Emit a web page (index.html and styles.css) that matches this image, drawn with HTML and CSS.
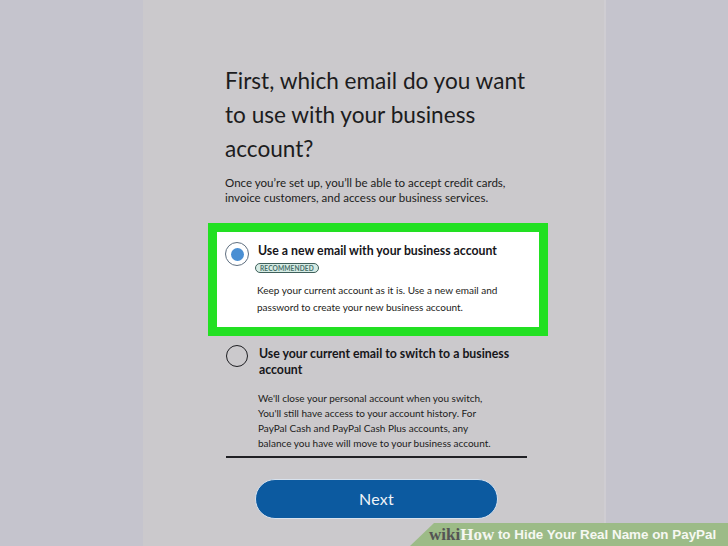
FILE: index.html
```html
<!DOCTYPE html>
<html lang="en">
<head>
<meta charset="utf-8">
<title>Business account email</title>
<link rel="stylesheet" href="styles.css">
</head>
<body>
<div class="page">
  <div class="side"></div>
  <main class="panel">
    <div class="content">
      <h1 class="heading">First, which email do you want to use with your business account?</h1>
      <p class="lead">Once you’re set up, you’ll be able to accept credit cards, invoice customers, and access our business services.</p>

      <div class="option option-selected">
        <span class="radio radio-on"><span class="dot"></span></span>
        <div class="option-body">
          <div class="option-title">Use a new email with your business account</div>
          <span class="badge">RECOMMENDED</span>
          <p class="option-desc">Keep your current account as it is. Use a new email and password to create your new business account.</p>
        </div>
      </div>

      <div class="option option-plain">
        <span class="radio radio-off"></span>
        <div class="option-body">
          <div class="option-title title-wrap">Use your current email to switch to a business account</div>
          <p class="option-desc desc-long">We'll close your personal account when you switch, You'll still have access to your account history. For PayPal Cash and PayPal Cash Plus accounts, any balance you have will move to your business account.</p>
        </div>
      </div>

      <div class="divider"></div>

      <button class="next" type="button">Next</button>
    </div>
  </main>
  <div class="side side-right"></div>

  <div class="wikihow"><span class="wh-wiki">wiki</span><span class="wh-how">How</span><span class="wh-rest"> to Hide Your Real Name on PayPal</span></div>
</div>
</body>
</html>
```

FILE: styles.css
```css
* { box-sizing: border-box; }

html, body {
  margin: 0;
  padding: 0;
  width: 728px;
  height: 546px;
  overflow: hidden;
}

body {
  font-family: "Lato", "Open Sans", sans-serif;
  color: #1e1e22;
  background: #c5c4cd;
}

.page {
  position: relative;
  display: flex;
  width: 728px;
  height: 546px;
}

.side {
  width: 143px;
  flex: none;
  background: #c5c4cd;
}

.side-right {
  flex: 1;
  width: auto;
  border-left: 2px solid #cfcdd2;
}

.panel {
  width: 461px;
  flex: none;
  background: #cbc9cc;
  padding: 64px 0 0 65px;
}

.content {
  width: 341px;
  display: flex;
  flex-direction: column;
  align-items: flex-start;
}

.heading {
  margin: 0;
  padding-left: 17px;
  font-weight: 400;
  font-size: 22.6px;
  line-height: 34px;
  color: #1c1c20;
  width: 325px;
}

.lead {
  margin: 9px 0 0;
  padding-left: 17px;
  font-size: 11.55px;
  line-height: 15px;
  color: #1c1c20;
  width: 310px;
}

.option {
  display: flex;
  align-items: flex-start;
}

.option-selected {
  margin-top: 18px;
  width: 340px;
  background: #ffffff;
  border: 9px solid #22e022;
  padding: 11px 8px 12px 8px;
}

.option-plain {
  padding: 10px 0 0 18px;
}

.radio {
  flex: none;
  border-radius: 50%;
  display: flex;
  align-items: center;
  justify-content: center;
}

.radio-on {
  width: 24px;
  height: 24px;
  border: 1.5px solid #5f6f80;
  margin-top: -1px;
}

.dot {
  width: 13px;
  height: 13px;
  border-radius: 50%;
  background: #4a8fd3;
}

.radio-off {
  width: 22px;
  height: 22px;
  border: 1.5px solid #1e1e22;
  margin-top: -1px;
}

.option-body {
  display: flex;
  flex-direction: column;
  align-items: flex-start;
}

.option-selected .option-body {
  margin-left: 9px;
}

.option-plain .option-body {
  margin-left: 11px;
}

.option-title {
  font-weight: 700;
  font-size: 12.3px;
  line-height: 16px;
  color: #16161a;
}

.title-wrap {
  width: 260px;
}

.badge {
  margin: 4px 0 0 -3px;
  height: 10px;
  padding: 0 4px;
  border: 1px solid #3e5f5a;
  border-radius: 6px;
  background: #d6ece5;
  color: #48706a;
  font-size: 6.6px;
  line-height: 8px;
  font-weight: 700;
  letter-spacing: 0.1px;
}

.option-desc {
  margin: 9px 0 0 -1px;
  font-size: 10px;
  line-height: 16.5px;
  color: #1c1c20;
  width: 250px;
}

.desc-long {
  margin: 13px 0 0 -1px;
  font-size: 10px;
  line-height: 15px;
  width: 240px;
}

.divider {
  margin: 5px 0 0 18px;
  width: 301px;
  height: 1.5px;
  background: #202024;
}

.next {
  margin: 21px 0 0 47px;
  width: 243px;
  height: 40px;
  border: 1px solid #d8e2ee;
  border-radius: 20px;
  background: #0c5aa0;
  color: #eef3f8;
  font-family: "Lato", "Open Sans", sans-serif;
  font-size: 16px;
  letter-spacing: 0.3px;
}

.wikihow {
  position: absolute;
  left: 410px;
  top: 523px;
  right: 0;
  bottom: 0;
  background: #9cbb87;
  clip-path: polygon(24px 0, 100% 0, 100% 100%, 0 100%);
  padding-left: 19px;
  display: flex;
  align-items: center;
  white-space: nowrap;
}

.wh-wiki {
  font-family: "Liberation Serif", serif;
  font-weight: 700;
  font-size: 17px;
  color: #545454;
}

.wh-how {
  font-family: "Liberation Serif", serif;
  font-weight: 700;
  font-size: 17px;
  color: #f4f6f0;
}

.wh-rest {
  font-family: "Liberation Sans", sans-serif;
  font-weight: 700;
  font-size: 13.4px;
  color: #f6f8f2;
  white-space: pre;
}
```
